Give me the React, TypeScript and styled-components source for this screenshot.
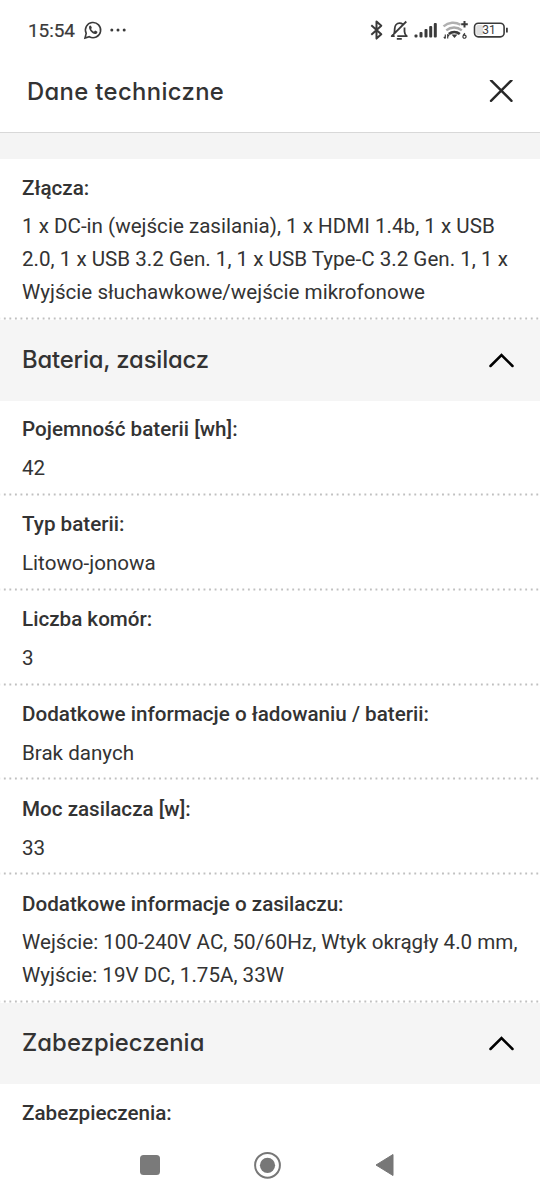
import React from "react";
import styled, { createGlobalStyle } from "styled-components";

const Global = createGlobalStyle`
  * { box-sizing: border-box; }
  body { margin: 0; background: #fff; color: #333; font-family: Roboto, "Liberation Sans", sans-serif; overflow: hidden; }
`;

const Screen = styled.div`
  width: 540px;
  height: 1200px;
  display: flex;
  flex-direction: column;
  overflow: hidden;
  background: #fff;
`;

const StatusBar = styled.div`
  height: 60px;
  flex: none;
  display: flex;
  align-items: center;
  justify-content: space-between;
  padding: 0 31px 0 28px;
`;

const Group = styled.div`
  display: flex;
  align-items: center;
`;

const Clock = styled.span`
  font-size: 19px;
  line-height: 24px;
  letter-spacing: -0.1px;
  color: #3a3a3a;
  margin-right: 8px;
  padding-top: 1px;
  -webkit-text-stroke: 0.2px #3a3a3a;
`;

const TitleBar = styled.header`
  height: 73px;
  flex: none;
  display: flex;
  align-items: center;
  justify-content: space-between;
  padding: 0 27px 9px;
  border-bottom: 1px solid #d8d8d8;
`;

const Heading = styled.h2<{ $spacing: number }>`
  margin: 0;
  font-family: Inter, "Liberation Sans", sans-serif;
  font-feature-settings: "cv11" 1;
  font-weight: 500;
  font-size: 23.8px;
  line-height: 34px;
  letter-spacing: ${(p) => p.$spacing}px;
  white-space: nowrap;
  color: #333;
`;

const Content = styled.main`
  flex: 1;
  min-height: 0;
  overflow: hidden;
`;

const Spacer = styled.div`
  height: 26px;
  background: #f4f4f4;
`;

const SectionBar = styled.div`
  height: 81px;
  display: flex;
  align-items: center;
  justify-content: space-between;
  padding: 0 26.5px 1px 22px;
  background: #f5f5f5;
`;

const Row = styled.div`
  padding: 12.6px 10px 10.7px 22px;
  background: radial-gradient(circle at 50% 50%, #c0c0c0 0.8px, transparent 1.4px) 2px 100% / 5.55px 3px repeat-x;
`;

const Label = styled.div`
  font-weight: 500;
  font-size: 20.63px;
  line-height: 33px;
  margin-bottom: 5.6px;
`;

const Value = styled.div`
  font-size: 20.6px;
  line-height: 33px;
  white-space: pre;
`;

const NavBar = styled.nav`
  height: 70px;
  flex: none;
  display: flex;
  align-items: center;
  padding: 0 145px 0 140px;
  justify-content: space-between;
`;

const StatusIcons = () => (
  <svg width="140" height="28" viewBox="369 16 140 28" fill="none" stroke="#3a3a3a" strokeWidth="1.8" strokeLinejoin="round">
    <path d="M371.300 25.300l10 9-4.800 4.300V21.400l4.800 4.300-10 9" strokeWidth="2" />
    <path d="M393.800 34.500c.9-1.500.9-3.500.9-5.700 0-3.200 2-5.600 4.900-5.600 1.200 0 2.300.4 3.100 1.100M404.500 27.500v4c0 2 .7 3.300 2.300 4.700h-9.500M406.300 21.500L391.700 36.200h3M396.800 38.800h5" />
    <g fill="#3a3a3a" stroke="none">
      <rect x="414.500" y="34.500" width="3" height="3" rx="1" />
      <rect x="419.500" y="32" width="3" height="5.500" rx="1" />
      <rect x="424.500" y="29" width="3" height="8.500" rx="1" />
      <rect x="429.200" y="26" width="3" height="11.500" rx="1" />
      <rect x="433.800" y="23" width="3" height="14.500" rx="1" />
    </g>
    <path d="M443.500 26.300c5-4.300 12-4.600 17-1.500" stroke="#b0b0b0" strokeWidth="2.400" />
    <path d="M446.300 30.400c4.500-3.800 11-3.800 15.500 0" stroke="#aaa" strokeWidth="2.400" />
    <path d="M448.800 34.100c3.200-2.700 7.800-2.700 11 0" strokeWidth="2.600" />
    <path d="M451.500 34.600h6l-3 3.400z" fill="#3a3a3a" stroke="none" />
    <path d="M464.500 21v6.500M461.200 24.200h6.600" strokeWidth="2" />
    <path d="M445.300 34.500v4M443.800 36.800l1.500 1.700M447.700 38.500v-4l1.400 1.700" strokeWidth="1.200" />
    <path d="M464.900 33.200c-1.500 1.300-2 2.300-2 3.500a1.600 1.600 0 1 0 .5-1.200" strokeWidth="1.200" />
    <rect x="474.500" y="23.300" width="29.600" height="13.600" rx="3.800" strokeWidth="1.600" />
    <rect x="476.200" y="25" width="7" height="10.200" rx="2" fill="#e0e0e0" stroke="none" />
    <path d="M506.900 27.800v4.600" strokeWidth="1.800" />
    <text x="489" y="34.300" textAnchor="middle" fontFamily="Roboto" fontSize="12" fill="#3a3a3a" stroke="none">31</text>
  </svg>
);

const ChatIcon = () => (
  <svg width="44" height="20" viewBox="0 0 44 20" fill="none" stroke="#3a3a3a">
    <path d="M2 18l1.200-4.600A7.600 7.600 0 1 1 6.300 16.700z" strokeWidth="1.600" />
    <path d="M6.200 6.300c.7-1 1.600-.9 2 0l.6 1.400c.1.500-.5 1-.8 1.400.7 1.300 1.600 2 3 2.700l1.100-1.200 2 .9c.7.500.2 1.700-.7 2.200-3.300 1.400-8.300-3.700-7.200-7.400z" fill="#3a3a3a" stroke="none" />
    <g fill="#3a3a3a" stroke="none">
      <circle cx="28.800" cy="10" r="1.500" />
      <circle cx="35" cy="10" r="1.500" />
      <circle cx="41.200" cy="10" r="1.500" />
    </g>
  </svg>
);

const CloseIcon = () => (
  <svg width="24" height="24" viewBox="0 0 24 24" fill="none" stroke="#282828" strokeWidth="2.400" strokeLinecap="round">
    <path d="M2 0.300l20.500 20.500M22.500 0.300L2 20.800" overflow="visible" />
  </svg>
);

const Chevron = () => (
  <svg width="26" height="16" viewBox="0 0 26 16" fill="none" stroke="#000" strokeWidth="2.500" strokeLinecap="round">
    <path d="M2.500 14L13.500 3l11 11" />
  </svg>
);

const Section = ({ title, spacing }: { title: string; spacing: number }) => (
  <SectionBar>
    <Heading $spacing={spacing}>{title}</Heading>
    <Chevron />
  </SectionBar>
);

const Spec = ({ label, value }: { label: string; value: string }) => (
  <Row>
    <Label>{label}</Label>
    <Value>{value}</Value>
  </Row>
);

const battery = [
  ["Pojemność baterii [wh]:", "42"],
  ["Typ baterii:", "Litowo-jonowa"],
  ["Liczba komór:", "3"],
  ["Dodatkowe informacje o ładowaniu / baterii:", "Brak danych"],
  ["Moc zasilacza [w]:", "33"],
  ["Dodatkowe informacje o zasilaczu:", "Wejście: 100-240V AC, 50/60Hz, Wtyk okrągły 4.0 mm,\nWyjście: 19V DC, 1.75A, 33W"],
];

export default function App() {
  return (
    <Screen>
      <Global />
      <StatusBar>
        <Group>
          <Clock>15:54</Clock>
          <ChatIcon />
        </Group>
        <StatusIcons />
      </StatusBar>
      <TitleBar>
        <Heading $spacing={0.37}>Dane techniczne</Heading>
        <CloseIcon />
      </TitleBar>
      <Content>
        <Spacer />
        <Spec
          label="Złącza:"
          value={"1 x DC-in (wejście zasilania), 1 x HDMI 1.4b, 1 x USB\n2.0, 1 x USB 3.2 Gen. 1, 1 x USB Type-C 3.2 Gen. 1, 1 x\nWyjście słuchawkowe/wejście mikrofonowe"}
        />
        <Section title="Bateria, zasilacz" spacing={-0.15} />
        {battery.map(([label, value]) => (
          <Spec key={label} label={label} value={value} />
        ))}
        <Section title="Zabezpieczenia" spacing={0.07} />
        <Spec label="Zabezpieczenia:" value="" />
      </Content>
      <NavBar>
        <svg width="20" height="20" viewBox="0 0 20 20"><rect width="20" height="20" rx="3.500" fill="#7a7a7a" /></svg>
        <svg width="28" height="28" viewBox="0 0 28 28">
          <circle cx="13.500" cy="14.300" r="12.400" fill="none" stroke="#777" strokeWidth="2" />
          <circle cx="13.500" cy="14.300" r="7.600" fill="#777" />
        </svg>
        <svg width="20" height="24" viewBox="0 0 20 24"><path d="M1 12L18 1.500v21z" fill="#777" stroke="#777" strokeLinejoin="round" /></svg>
      </NavBar>
    </Screen>
  );
}
